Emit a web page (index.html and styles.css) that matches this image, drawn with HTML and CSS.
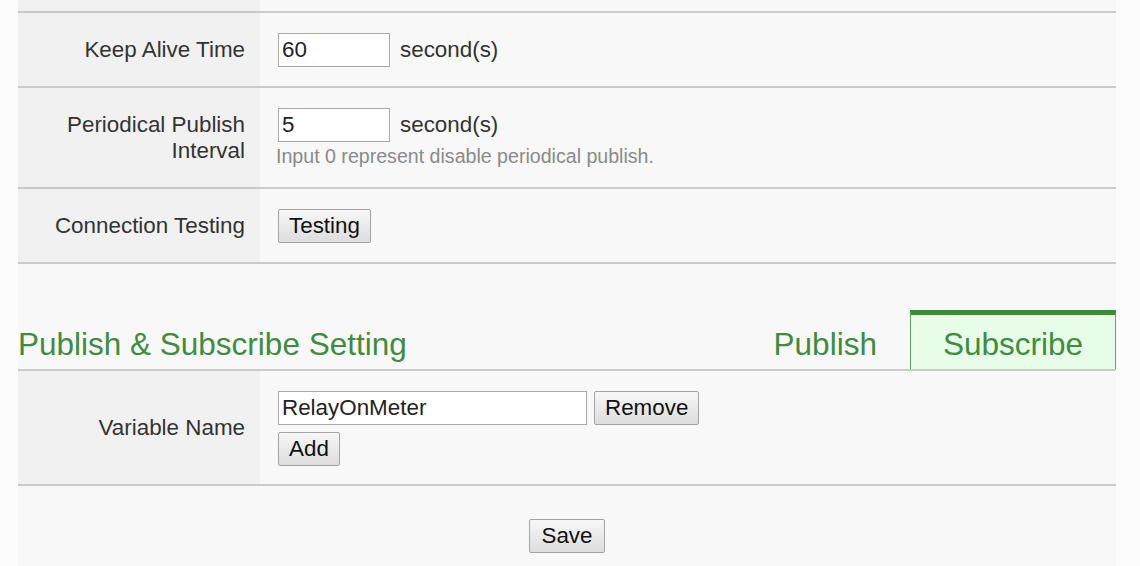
FILE: index.html
```html
<!DOCTYPE html>
<html>
<head>
<meta charset="utf-8">
<link rel="stylesheet" href="styles.css">
</head>
<body>
<div class="page">
  <div class="row row-cut">
    <div class="label"></div>
    <div class="value"></div>
  </div>
  <div class="row">
    <div class="label">Keep Alive Time</div>
    <div class="value">
      <div class="line"><input class="num" type="text" value="60"><span class="unit">second(s)</span></div>
    </div>
  </div>
  <div class="row">
    <div class="label">Periodical Publish<br>Interval</div>
    <div class="value">
      <div class="line"><input class="num" type="text" value="5"><span class="unit">second(s)</span></div>
      <div class="hint">Input 0 represent disable periodical publish.</div>
    </div>
  </div>
  <div class="row">
    <div class="label">Connection Testing</div>
    <div class="value">
      <div class="line"><button class="btn">Testing</button></div>
    </div>
  </div>

  <div class="section-head">
    <div class="title">Publish &amp; Subscribe Setting</div>
    <div class="tabs">
      <div class="tab">Publish</div>
      <div class="tab active">Subscribe</div>
    </div>
  </div>

  <div class="row">
    <div class="label">Variable Name</div>
    <div class="value tight">
      <div class="line gap"><input class="name" type="text" value="RelayOnMeter"><button class="btn">Remove</button></div>
      <div class="line add"><button class="btn">Add</button></div>
    </div>
  </div>

  <div class="actions">
    <button class="btn">Save</button>
  </div>
</div>
</body>
</html>
```

FILE: styles.css
```css
html, body {
  margin: 0;
  padding: 0;
  background: #fcfcfc;
}
body {
  font-family: "Liberation Sans", Arial, sans-serif;
  color: #333;
}
.page {
  margin-left: 18px;
  width: 1098px;
  height: 566px;
  background: #f8f8f8;
}
.row {
  display: grid;
  grid-template-columns: 242px 1fr;
  border-bottom: 2px solid #cbcbcb;
}
.row-cut {
  height: 11px;
}
.label {
  background: #f1f1f1;
  display: flex;
  align-items: center;
  justify-content: flex-end;
  text-align: right;
  padding-right: 15px;
  font-size: 22.4px;
  line-height: 26px;
  color: #333;
}
.value {
  padding: 20px 18px 19px 18px;
}
.value.tight {
  padding-bottom: 18px;
}
.row-cut .value {
  padding: 0;
}
.line {
  display: flex;
  align-items: center;
  height: 34px;
}
.line.gap {
  gap: 7px;
}
.line.add {
  margin-top: 7px;
}
input {
  box-sizing: border-box;
  height: 34px;
  border: 1px solid #a9a9a9;
  background: #fff;
  font-family: "Liberation Sans", Arial, sans-serif;
  font-size: 22.4px;
  color: #222;
  padding: 0 3px;
  margin: 0;
}
.num {
  width: 112px;
}
.name {
  width: 309px;
}
.unit {
  margin-left: 10px;
  font-size: 22.4px;
  color: #333;
}
.hint {
  margin-top: 3px;
  margin-left: -2px;
  font-size: 19.6px;
  line-height: 23px;
  color: #8a8a8a;
}
.btn {
  box-sizing: border-box;
  height: 34px;
  padding: 0 10px;
  border: 1px solid #a3a3a3;
  border-radius: 2px;
  background: linear-gradient(#f7f7f7, #dddddd);
  font-family: "Liberation Sans", Arial, sans-serif;
  font-size: 22.4px;
  color: #111;
  margin: 0;
}
.section-head {
  display: flex;
  justify-content: space-between;
  align-items: flex-end;
  padding-top: 46px;
  border-bottom: 2px solid #cbcbcb;
}
.title {
  font-size: 31.5px;
  line-height: 36px;
  color: #3f8c3f;
  padding-bottom: 7px;
}
.tabs {
  display: flex;
  align-items: flex-end;
}
.tab {
  font-size: 31.5px;
  line-height: 36px;
  color: #3f8c3f;
  padding: 11px 32px 7px 32px;
  border-top: 5px solid transparent;
  border-left: 1px solid transparent;
  border-right: 1px solid transparent;
}
.tab.active {
  background: #e7fde7;
  border-top-color: #3d8a3d;
  border-left-color: #62a862;
  border-right-color: #62a862;
}
.actions {
  display: flex;
  justify-content: center;
  padding-top: 33px;
}
.actions .btn {
  padding: 0 11px;
}
```
